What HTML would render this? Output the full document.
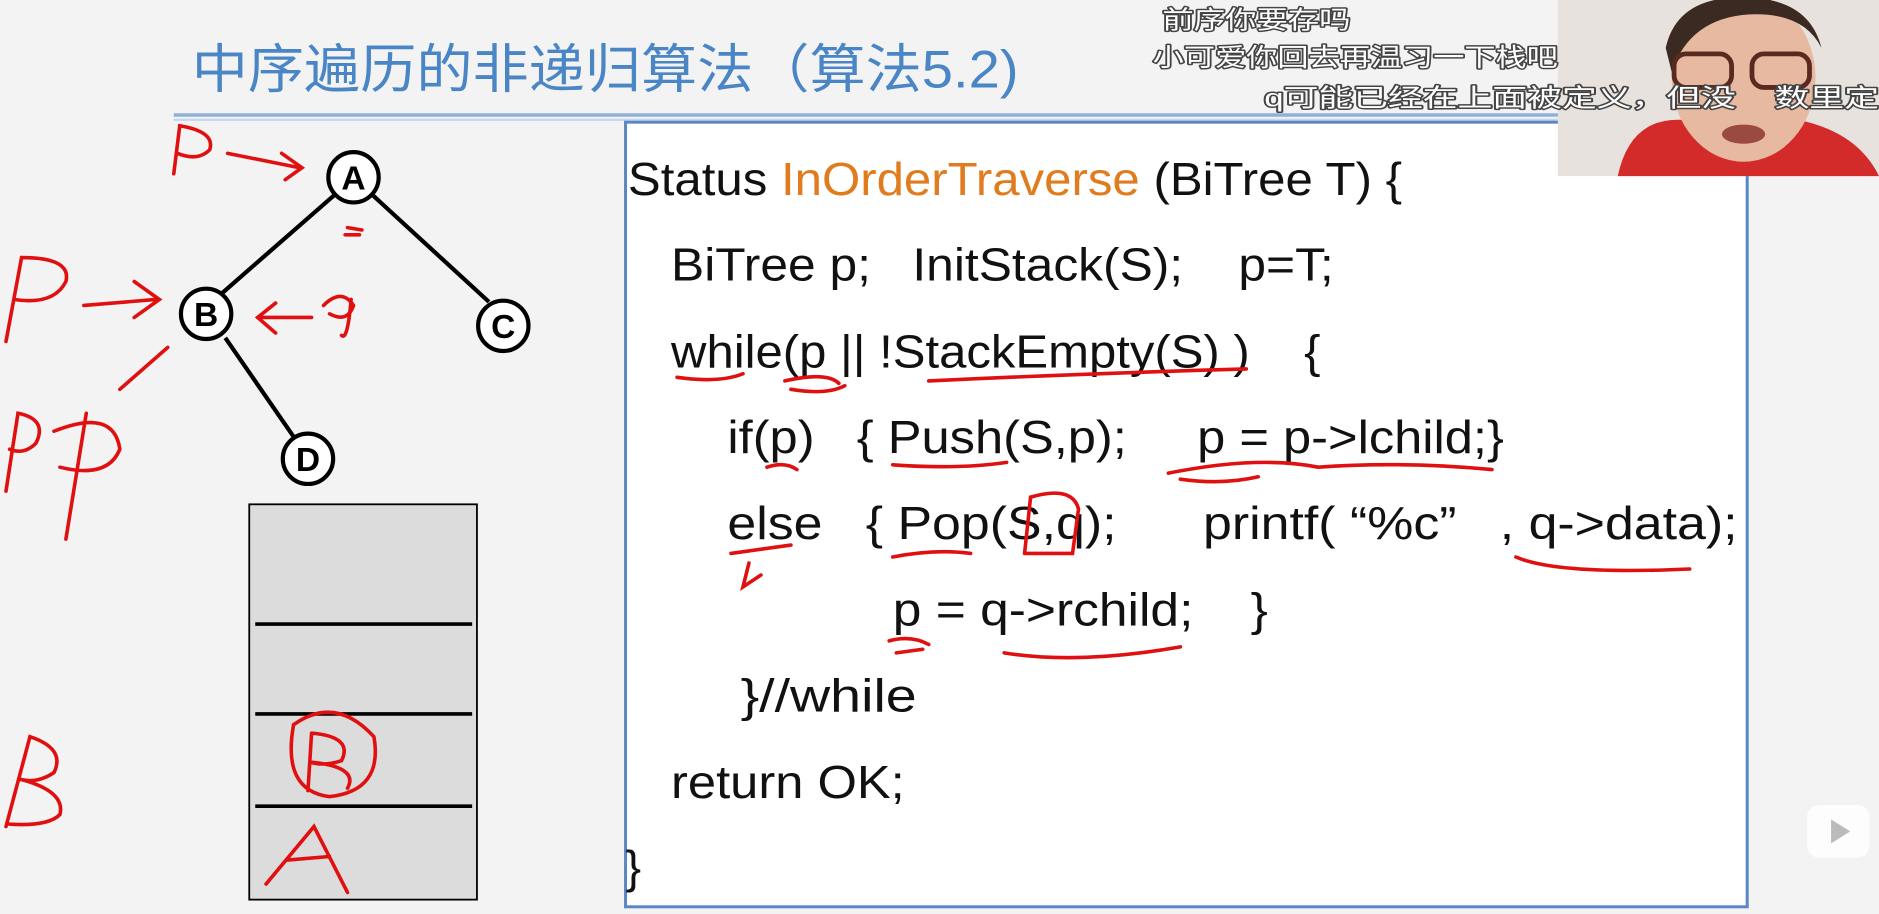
<!DOCTYPE html>
<html><head><meta charset="utf-8"><style>
html,body{margin:0;padding:0;width:1879px;height:914px;overflow:hidden;background:#f3f3f3}
svg{display:block}
text{font-family:"Liberation Sans","Noto Sans CJK SC",sans-serif;white-space:pre}
</style></head><body>
<svg width="1879" height="914" viewBox="0 0 1568 763" preserveAspectRatio="none" xmlns="http://www.w3.org/2000/svg" xml:space="preserve">
<rect width="1568" height="763" fill="#f3f3f3"/>
<text x="160" y="73" font-size="44" fill="#4a86c6" textLength="690" lengthAdjust="spacingAndGlyphs">中序遍历的非递归算法（算法5.2)</text>
<line x1="145" y1="96" x2="1460" y2="96" stroke="#8fb0d8" stroke-width="3"/>
<line x1="145" y1="100" x2="1460" y2="100" stroke="#c9d8ec" stroke-width="2"/>
<rect x="522" y="102" width="936" height="655" fill="#fff" stroke="#5a86c2" stroke-width="2.5"/>
<g font-size="39" fill="#111">
<text x="524" y="163" textLength="646" lengthAdjust="spacingAndGlyphs">Status <tspan fill="#e07b1e">InOrderTraverse</tspan> (BiTree T) {</text>
<text x="560" y="234" textLength="553" lengthAdjust="spacingAndGlyphs">BiTree p;   InitStack(S);    p=T;</text>
<text x="560" y="307" textLength="542" lengthAdjust="spacingAndGlyphs">while(p || !StackEmpty(S) )    {</text>
<text x="607" y="378" textLength="648" lengthAdjust="spacingAndGlyphs">if(p)   { Push(S,p);     p = p-&gt;lchild;}</text>
<text x="607" y="450" textLength="843" lengthAdjust="spacingAndGlyphs">else   { Pop(S,q);      printf( “%c”   , q-&gt;data);</text>
<text x="745" y="522" textLength="313" lengthAdjust="spacingAndGlyphs">p = q-&gt;rchild;    }</text>
<text x="618" y="594" textLength="147" lengthAdjust="spacingAndGlyphs">}//while</text>
<text x="560" y="666" textLength="195" lengthAdjust="spacingAndGlyphs">return OK;</text>
<text x="522" y="737">}</text>
</g>
<g stroke="#000" stroke-width="3.5" fill="none">
<line x1="280" y1="162" x2="185" y2="245"/><line x1="310" y1="162" x2="408" y2="252"/><line x1="188" y1="282" x2="246" y2="366"/>
</g>
<g stroke="#000" stroke-width="3.5" fill="#fff">
<circle cx="295" cy="148" r="21"/><circle cx="172" cy="262" r="21"/><circle cx="420" cy="272" r="21"/><circle cx="257" cy="383" r="21"/>
</g>
<g font-size="28" font-weight="bold" text-anchor="middle" fill="#000">
<text x="295" y="158">A</text><text x="172" y="272">B</text><text x="420" y="282">C</text><text x="257" y="393">D</text>
</g>
<rect x="208" y="421" width="190" height="330" fill="#dcdcdc" stroke="#000" stroke-width="1.5"/>
<g stroke="#000" stroke-width="3"><line x1="213" y1="521" x2="394" y2="521"/><line x1="213" y1="596" x2="394" y2="596"/><line x1="213" y1="673" x2="394" y2="673"/></g>
<g stroke="#e01010" stroke-width="3" fill="none" stroke-linecap="round">
<path d="M145 145 L150 105 Q180 110 175 125 Q165 135 148 128"/><path d="M190 128 L250 140 M235 128 L252 140 L238 150"/>
<path d="M290 190 L302 192 M288 196 L300 196"/>
<path d="M5 285 L18 215 Q60 215 55 235 Q45 255 12 250"/><path d="M70 255 L130 250 M112 235 L133 250 L112 265"/>
<path d="M215 265 L260 265 M230 253 L215 265 L230 278"/><path d="M270 255 Q285 240 295 255 Q290 270 275 262 M293 250 Q290 285 285 280"/>
<path d="M100 325 L140 290"/><path d="M5 410 L15 345 Q40 350 30 370 Q20 380 8 375"/><path d="M55 450 L72 345 M45 360 Q95 340 100 375 Q90 400 50 390"/>
<path d="M5 690 L25 615 Q55 625 45 645 Q30 655 15 650 Q55 660 50 680 Q40 690 8 688"/>
<path d="M245 605 Q280 580 312 615 Q320 660 275 665 Q235 660 245 605 M260 612 L257 660 M260 612 Q295 615 285 635 Q270 640 258 636 Q300 640 290 658"/>
<path d="M222 738 L262 690 L290 745 M240 718 L275 715"/>
<path d="M565 315 Q600 320 620 312 M655 318 Q690 310 700 320 M660 325 Q690 330 705 322"/>
<path d="M775 318 Q900 312 1040 308"/>
<path d="M640 390 Q655 385 665 392"/><path d="M745 388 Q800 392 840 386"/><path d="M975 395 Q1050 380 1100 390 Q1170 385 1245 392 M985 400 Q1020 405 1050 398"/>
<path d="M610 462 L660 455 M625 470 L620 490 L635 480"/><path d="M745 465 Q780 458 810 462"/><path d="M855 462 L860 415 Q895 405 900 425 L895 462 L855 462"/>
<path d="M1265 465 Q1300 480 1410 475"/><path d="M742 535 Q760 530 775 538 M748 545 L770 542"/><path d="M838 545 Q900 555 985 540"/>
</g>
<rect x="1300" y="0" width="268" height="147" fill="#e7e2dd"/>
<path d="M1350 147 Q1360 100 1400 100 L1500 100 Q1550 110 1568 147 Z" fill="#d32a2a"/>
<ellipse cx="1455" cy="65" rx="60" ry="70" fill="#e7b9a0"/>
<path d="M1390 40 Q1400 -5 1460 -2 Q1510 0 1520 40 Q1505 10 1460 12 Q1410 15 1395 60 Z" fill="#3a2a22"/>
<g stroke="#5a2a20" stroke-width="4" fill="none"><rect x="1397" y="45" width="48" height="28" rx="10"/><rect x="1462" y="45" width="48" height="28" rx="10"/></g>
<ellipse cx="1455" cy="112" rx="18" ry="8" fill="#9a4a40"/>
<g font-size="21" fill="#fff" stroke="#444" stroke-width="2.5" paint-order="stroke" stroke-linejoin="round">
<text x="970" y="24" textLength="157" lengthAdjust="spacingAndGlyphs">前序你要存吗</text><text x="962" y="55" textLength="338" lengthAdjust="spacingAndGlyphs">小可爱你回去再温习一下栈吧</text><text x="1055" y="89" textLength="513" lengthAdjust="spacingAndGlyphs">q可能已经在上面被定义，但没    数里定</text>
</g>
<rect x="1508" y="672" width="52" height="44" rx="10" fill="#fff" opacity="0.8"/>
<path d="M1528 684 L1544 694 L1528 704 Z" fill="#bbb"/>
</svg>
</body></html>
